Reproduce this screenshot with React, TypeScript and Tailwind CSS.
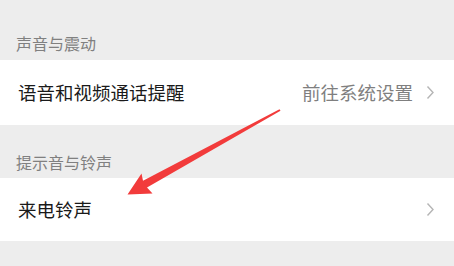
import React from 'react'

const font = { fontFamily: '"Noto Sans CJK SC", "Noto Sans", sans-serif' }

function Chevron() {
  return (
    <svg width="9" height="15" viewBox="0 0 9 15" className="shrink-0">
      <path d="M1.5 1.5 L7 7.5 L1.5 13.5" fill="none" stroke="#b5b5b5" strokeWidth="1.4" />
    </svg>
  )
}

export default function App() {
  return (
    <div className="relative w-[454px] h-[266px] overflow-hidden bg-[#ededed]" style={font}>
      {/* Section 1 */}
      <div className="h-[60px] flex items-end px-[16px] pb-[6px]">
        <span className="text-[16px] leading-[22px] text-[#808080]">声音与震动</span>
      </div>
      <div className="h-[65px] bg-white flex items-center pl-[18px] pr-[19px]">
        <span className="text-[18.5px] text-[#1a1a1a] flex-1">语音和视频通话提醒</span>
        <span className="text-[18.5px] text-[#7f7f7f] mr-[13px]">前往系统设置</span>
        <Chevron />
      </div>

      {/* Section 2 */}
      <div className="h-[53px] flex items-end px-[16px] pb-[5px]">
        <span className="text-[16px] leading-[22px] text-[#808080]">提示音与铃声</span>
      </div>
      <div className="h-[63px] bg-white flex items-center pl-[18px] pr-[19px]">
        <span className="text-[18.5px] text-[#1a1a1a] flex-1">来电铃声</span>
        <Chevron />
      </div>

      {/* annotation arrow */}
      <svg className="absolute inset-0 pointer-events-none" width="454" height="266" viewBox="0 0 454 266">
        <polygon
          points="280.5,110.7 279.5,109.3 143,180.8 141.5,173.5 127.5,194.5 152.5,193.5 147,187.4"
          fill="#f23b3b"
        />
      </svg>
    </div>
  )
}
